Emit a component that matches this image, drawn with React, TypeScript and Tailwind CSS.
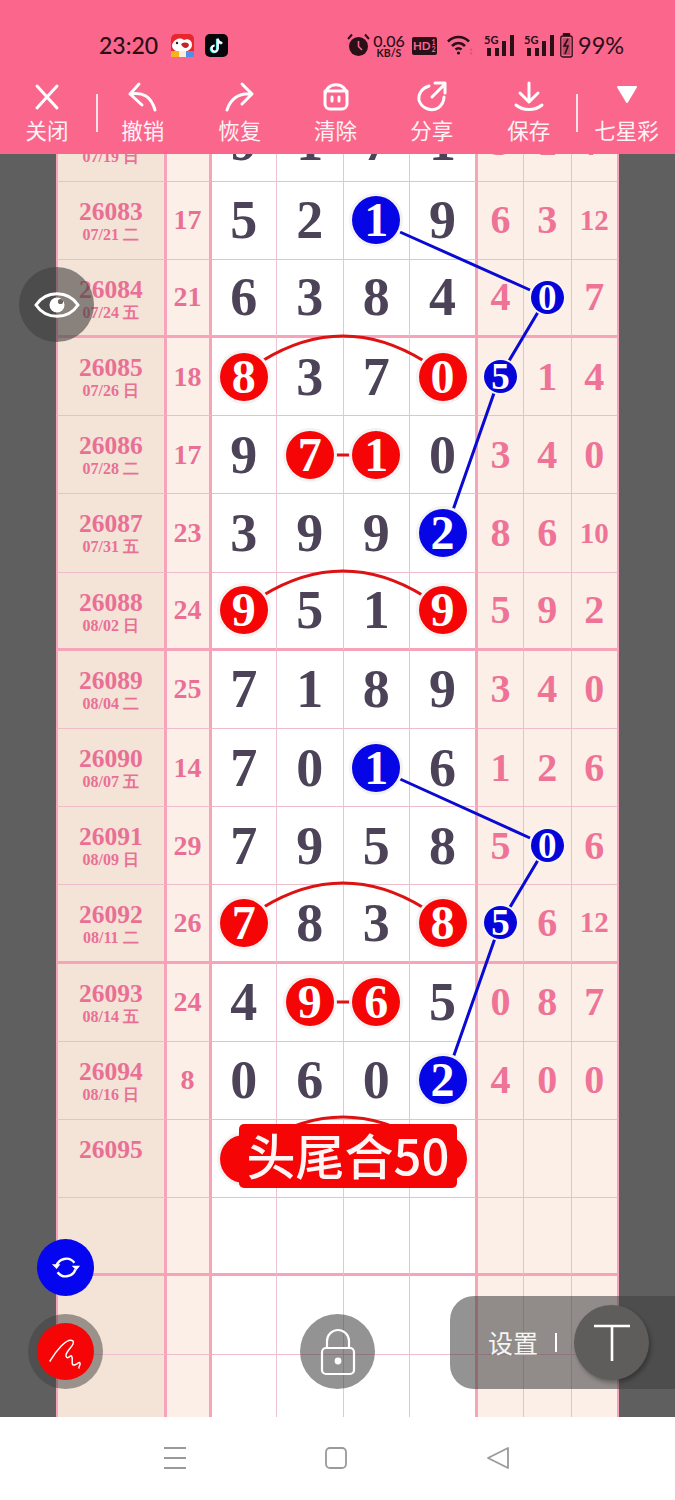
const serif = "font-['Liberation_Serif',serif] font-bold";
const cjk = "font-['Noto_Sans_CJK_SC',sans-serif]";

type Mark = 'red' | 'blue' | 'small' | undefined;

type Row = {
  issue?: string;
  date?: string;
  sum?: string;
  digits?: string[];
  marks?: Mark[];
  side?: string[];
  sideMarks?: Mark[];
  thick?: boolean;
};

const rows: Row[] = [
  { issue: '26082', date: '07/19 日', digits: ['9', '1', '7', '1'], side: ['3', '1', '7'] },
  { issue: '26083', date: '07/21 二', sum: '17', digits: ['5', '2', '1', '9'], marks: [, , 'blue'], side: ['6', '3', '12'] },
  { issue: '26084', date: '07/24 五', sum: '21', digits: ['6', '3', '8', '4'], side: ['4', '0', '7'], sideMarks: [, 'small'], thick: true },
  { issue: '26085', date: '07/26 日', sum: '18', digits: ['8', '3', '7', '0'], marks: ['red', , , 'red'], side: ['5', '1', '4'], sideMarks: ['small'] },
  { issue: '26086', date: '07/28 二', sum: '17', digits: ['9', '7', '1', '0'], marks: [, 'red', 'red'], side: ['3', '4', '0'] },
  { issue: '26087', date: '07/31 五', sum: '23', digits: ['3', '9', '9', '2'], marks: [, , , 'blue'], side: ['8', '6', '10'] },
  { issue: '26088', date: '08/02 日', sum: '24', digits: ['9', '5', '1', '9'], marks: ['red', , , 'red'], side: ['5', '9', '2'], thick: true },
  { issue: '26089', date: '08/04 二', sum: '25', digits: ['7', '1', '8', '9'], side: ['3', '4', '0'] },
  { issue: '26090', date: '08/07 五', sum: '14', digits: ['7', '0', '1', '6'], marks: [, , 'blue'], side: ['1', '2', '6'] },
  { issue: '26091', date: '08/09 日', sum: '29', digits: ['7', '9', '5', '8'], side: ['5', '0', '6'], sideMarks: [, 'small'] },
  { issue: '26092', date: '08/11 二', sum: '26', digits: ['7', '8', '3', '8'], marks: ['red', , , 'red'], side: ['5', '6', '12'], sideMarks: ['small'], thick: true },
  { issue: '26093', date: '08/14 五', sum: '24', digits: ['4', '9', '6', '5'], marks: [, 'red', 'red'], side: ['0', '8', '7'] },
  { issue: '26094', date: '08/16 日', sum: '8', digits: ['0', '6', '0', '2'], marks: [, , , 'blue'], side: ['4', '0', '0'] },
  { issue: '26095', digits: ['', '', '', ''], marks: ['red', , , 'red'] },
  { thick: true },
  {},
  {},
];

const Digit = ({ value, mark }: { value: string; mark?: Mark }) => {
  if (mark === 'red' || mark === 'blue') {
    return (
      <span
        className={`relative z-10 flex h-[48px] w-[48px] items-center justify-center rounded-full text-[48px] leading-none text-white ring-[3px] ring-[#f4f2f2] ${
          mark === 'red' ? 'bg-[#f50505]' : 'bg-[#0505e6]'
        }`}
      >
        {value}
      </span>
    );
  }
  return <span className="text-[54px] leading-none text-[#4d4358]">{value}</span>;
};

const SideDigit = ({ value, mark }: { value: string; mark?: Mark }) => {
  if (mark === 'small') {
    return (
      <span className="relative z-10 flex h-[33px] w-[33px] items-center justify-center rounded-full bg-[#0505d8] text-[37px] leading-none text-white ring-[2px] ring-[#f8f3f0]">
        {value}
      </span>
    );
  }
  return (
    <span className={`${value.length > 1 ? 'text-[29px]' : 'text-[40px]'} leading-none text-[#ee7397]`}>{value}</span>
  );
};

const TableRow = ({ row }: { row: Row }) => {
  const bottom = row.thick ? 'border-b-[3px] border-b-[#f7a3b9]' : 'border-b border-b-[#efbccb]';
  const digits = row.digits ?? ['', '', '', ''];
  const side = row.side ?? ['', '', ''];
  return (
    <div className={`grid h-[78.2px] grid-cols-[110.5px_45px_65.5px_66.5px_66.5px_68px_46px_47.5px_47.5px] ${serif}`}>
      <div className={`flex flex-col items-center justify-start border-r-[3px] border-l-2 border-r-[#f7a3b9] border-l-[#f7a3b9] bg-[#f4e3d7] pt-[18px] text-[#e96f95] ${bottom}`}>
        {row.issue && <span className="text-[25.5px] leading-[24px]">{row.issue}</span>}
        {row.date && <span className="text-[16px] leading-[22px]">{row.date}</span>}
      </div>
      <div className={`flex items-center justify-center border-r-[3px] border-r-[#f7a3b9] bg-[#fbefe8] text-[28px] text-[#e96f95] ${bottom}`}>
        {row.sum}
      </div>
      {digits.map((value, i) => (
        <div
          key={i}
          className={`flex items-center justify-center bg-white ${bottom} ${
            i === 3 ? 'border-r-[3px] border-r-[#f7a3b9]' : 'border-r border-r-[#ebc3d3]'
          }`}
        >
          {row.marks?.[i] || value ? <Digit value={value} mark={row.marks?.[i]} /> : null}
        </div>
      ))}
      {side.map((value, i) => (
        <div
          key={i}
          className={`flex items-center justify-center bg-[#fbefe8] ${bottom} ${
            i === 2 ? 'border-r-2 border-r-[#f7a3b9]' : 'border-r border-r-[#efbccb]'
          }`}
        >
          <SideDigit value={value} mark={row.sideMarks?.[i]} />
        </div>
      ))}
    </div>
  );
};

const Lines = () => (
  <svg className="absolute top-0 left-0 z-[5] h-[1263px] w-[675px]" viewBox="0 154 675 1263" fill="none">
    <g stroke="#0a0ad2" strokeWidth="3">
      <path d="M400 232 530 290M547 297 500 376 453 510" />
      <path d="M400 779 530 838M547 845 500 924 453 1058" />
    </g>
    <g stroke="#dd1212" strokeWidth="3">
      <path d="M262 361Q343 311 424 361" />
      <path d="M262 596Q343 546 424 596" />
      <path d="M262 908Q343 858 424 908" />
      <path d="M262 1142Q343 1092 424 1142" />
      <path d="M336 455H351M336 1002H351" />
    </g>
  </svg>
);

const StatusBar = () => (
  <div className="relative h-[71px] font-['Lato',sans-serif] text-[#2a0f18]">
    <span className="absolute top-[31px] left-[99px] text-[23px] leading-[28px] font-medium">23:20</span>
    <svg className="absolute top-[34px] left-[171px]" width="23" height="23" viewBox="0 0 23 23">
      <rect width="23" height="23" rx="5" fill="#e8262c" />
      <path d="M1 11C3 5 9 3 13 6C17 4 21 6 21 11C21 16 14 19 8 18C4 17 1 15 1 11Z" fill="#fff" />
      <path d="M10 10C13 8 17 8 18 11C17 15 12 15 10 10Z" fill="#c9222c" />
      <circle cx="6" cy="9" r="1.2" fill="#222" />
      <rect y="17" width="8" height="6" fill="#f6b21f" />
      <rect x="8" y="17" width="7" height="6" fill="#f5f0dc" />
      <rect x="15" y="17" width="8" height="6" fill="#4f8fe8" />
    </svg>
    <svg className="absolute top-[34px] left-[205px]" width="23" height="23" viewBox="0 0 23 23" fill="none">
      <rect width="23" height="23" rx="5" fill="#07060a" />
      <path d="M12.8 4.5V14.6A3.1 3.1 0 1 1 9.7 11.5M12.8 5.2C13.4 7.4 15 8.8 17.4 9" stroke="#25e3ea" strokeWidth="2.2" transform="translate(-.8 .5)" />
      <path d="M12.8 4.5V14.6A3.1 3.1 0 1 1 9.7 11.5M12.8 5.2C13.4 7.4 15 8.8 17.4 9" stroke="#fff" strokeWidth="2.2" />
    </svg>
    <svg className="absolute top-[33px] left-[347px]" width="23" height="24" viewBox="0 0 23 24" fill="#2a0f18">
      <circle cx="11.5" cy="13.5" r="9.5" />
      <path d="M11.5 8V13.5L15 17" stroke="#fb668c" strokeWidth="1.6" fill="none" />
      <path d="M1 6 5 1.5M22 6 18 1.5" stroke="#2a0f18" strokeWidth="2" />
    </svg>
    <div className="absolute top-[34px] left-[372px] flex w-[34px] flex-col items-center text-[#2a0f18]">
      <span className="text-[16px] leading-[14px] font-medium">0.06</span>
      <span className="text-[10.5px] leading-[10px] font-bold">KB/S</span>
    </div>
    <div className="absolute top-[37px] left-[412px] flex h-[18px] w-[25px] items-center rounded-[2px] bg-[#2a0f18] pl-[1px] text-[#fb668c]">
      <span className="text-[11.5px] leading-none font-bold">HD</span>
      <span className="ml-[1px] flex flex-col text-[7px] leading-[7px] font-bold">
        <span>1</span>
        <span>2</span>
      </span>
    </div>
    <svg className="absolute top-[34px] left-[447px]" width="27" height="22" viewBox="0 0 27 22" fill="none" stroke="#2a0f18" strokeWidth="2.6">
      <path d="M1 7.5C7 1.5 16 1.5 22 7.5M5 12C9 8 14 8 18 12M8.5 15.5C10.5 13.8 12.5 13.8 14.5 15.5" />
      <circle cx="11.5" cy="19" r="1.6" fill="#2a0f18" stroke="none" />
      <path d="M24 14 25.5 16.5H22.5ZM24 21 25.5 18.5H22.5Z" fill="#d9536f" stroke="none" />
    </svg>
    {[484, 524].map(left => (
      <div key={left} className="absolute top-[34px] h-[22px] w-[32px]" style={{ left }}>
        <span className="absolute top-0 left-0 text-[11px] leading-[11px] font-bold">5G</span>
        <span className="absolute bottom-0 left-[3px] h-[8px] w-[4px] bg-[#2a0f18]" />
        <span className="absolute bottom-0 left-[11px] h-[8px] w-[4px] bg-[#2a0f18]" />
        <span className="absolute bottom-0 left-[18px] h-[15px] w-[4px] bg-[#2a0f18]" />
        <span className="absolute bottom-0 left-[26px] h-[21px] w-[4px] bg-[#2a0f18]" />
      </div>
    ))}
    <svg className="absolute top-[33px] left-[560px]" width="13" height="25" viewBox="0 0 13 25" fill="none" stroke="#2a0f18" strokeWidth="1.3">
      <rect x="3.5" y=".7" width="6" height="2" fill="#2a0f18" />
      <rect x=".8" y="3" width="11.4" height="21" rx="2" />
      <path d="M8 6 4 13H8L5 21" strokeWidth="1.6" />
      <rect x="2.5" y="5" width="8" height="17" fill="#2a0f18" opacity=".3" stroke="none" />
    </svg>
    <span className="absolute top-[31px] left-[578px] text-[23.5px] leading-[28px]">99%</span>
  </div>
);

const Tool = ({ label, className, children }: { label: string; className: string; children: React.ReactNode }) => (
  <div className={`flex flex-col items-center ${className}`}>
    <svg width="36" height="36" viewBox="0 0 36 36" fill="none" stroke="#fff" strokeWidth="3" strokeLinecap="round" strokeLinejoin="round" className="mt-[8px]">
      {children}
    </svg>
    <span className={`${cjk} text-[21.5px] leading-[30px] text-[#fff3f6]`}>{label}</span>
  </div>
);

const Toolbar = () => (
  <div className="relative flex h-[83px]">
    <Tool label="关闭" className="w-[94px]">
      <path d="M8 7 28 29M28 7 8 29" />
    </Tool>
    <Tool label="撤销" className="w-[98px]">
      <path d="M14 5 5 15 17 26M5 15C18 13 26 17 30 31" />
    </Tool>
    <Tool label="恢复" className="w-[96px]">
      <path d="M20 5 30 15 20 25M30 15C18 14 9 19 5 31" />
    </Tool>
    <Tool label="清除" className="w-[96px]">
      <path d="M7 17C7 2 29 2 29 17M7 12H29V25A5 5 0 0 1 24 30H12A5 5 0 0 1 7 25Z" />
      <path d="M14 18V22M21 18V22" />
    </Tool>
    <Tool label="分享" className="w-[97px]">
      <path d="M15 7C8 9 4 15 5 21C7 29 17 33 24 29C28 26 30 23 30 18M18 18 31 5M21 4H31V14" />
    </Tool>
    <Tool label="保存" className="w-[97px]">
      <path d="M18 4V22M9 14 18 23 27 14M5 26C12 32 24 32 31 26" />
    </Tool>
    <Tool label="七星彩" className="ml-[1px] w-[97px]">
      <path d="M9 8H27L18 23Z" fill="#fff" strokeWidth="2" />
    </Tool>
    <span className="absolute top-[23px] left-[96px] h-[38px] w-[2px] bg-[#ffe3ea]" />
    <span className="absolute top-[23px] left-[576px] h-[38px] w-[2px] bg-[#ffe3ea]" />
  </div>
);

const FloatingButtons = () => (
  <>
    <div className="absolute top-[113px] left-[19px] z-20 flex h-[75px] w-[75px] items-center justify-center rounded-full bg-[#40404099]">
      <svg width="46" height="32" viewBox="0 0 46 32" fill="none">
        <path d="M2 16C12 1 34 1 44 16C34 31 12 31 2 16Z" stroke="#fff" strokeWidth="3" />
        <circle cx="23" cy="16" r="7.5" fill="#fff" />
        <circle cx="26.5" cy="12.5" r="2.6" fill="#6a6461" />
      </svg>
    </div>
    <div className="absolute top-[1085px] left-[37px] z-20 flex h-[57px] w-[57px] items-center justify-center rounded-full bg-[#0505f0]">
      <svg width="30" height="25" viewBox="0 0 32 26" fill="none" stroke="#fff" strokeWidth="2.6">
        <path d="M6 11C8 4 19 0 25 8M26 15C24 22 13 26 7 18" />
        <path d="M1 9.5H10L6 14.5ZM22 11H31L27 16Z" fill="#fff" stroke="none" />
      </svg>
    </div>
    <div className="absolute top-[1160px] left-[28px] z-20 flex h-[75px] w-[75px] items-center justify-center rounded-full bg-[#40404080]">
      <div className="flex h-[57px] w-[57px] items-center justify-center rounded-full bg-[#f50505]">
        <svg width="36" height="36" viewBox="0 0 36 36" fill="none" stroke="#fff" strokeWidth="1.5" strokeLinecap="round" strokeLinejoin="round">
          <path d="M2 27C8 17 19 3 25 7C28 11 17 17 18 22C20 27 23 19 24 23C25 26 23 29 25 31C28 32 31 27 32 29C33 31 30 33 31 34" />
        </svg>
      </div>
    </div>
    <div className="absolute top-[1160px] left-[300px] z-20 flex h-[75px] w-[75px] items-center justify-center rounded-full bg-[#40404090]">
      <svg width="38" height="48" viewBox="0 0 38 48" fill="none" stroke="#fff" strokeWidth="2.2">
        <path d="M8 21V13A11 11 0 0 1 30 13V21" />
        <rect x="3" y="20" width="32" height="26" rx="4" />
        <circle cx="19" cy="33" r="3.4" fill="#fff" stroke="none" />
      </svg>
    </div>
    <div className="absolute top-[1142px] left-[450px] z-20 flex h-[93px] w-[225px] items-center rounded-l-[24px] bg-[#40404090]">
      <span className={`${cjk} ml-[38px] text-[25px] leading-none text-[#f5f5f5]`}>设置</span>
      <span className="ml-[17px] h-[19px] w-[2px] bg-white" />
      <div className="absolute top-[9px] left-[124px] flex h-[75px] w-[75px] items-center justify-center rounded-full bg-[#5f5c5c] shadow-[2px_3px_4px_rgba(0,0,0,0.3)]">
        <svg width="36" height="38" viewBox="0 0 36 38" fill="none" stroke="#fff" strokeWidth="2.6">
          <path d="M0 2H36M18 2V37" />
        </svg>
      </div>
    </div>
  </>
);

const NavBar = () => (
  <div className="flex h-[83px] items-start bg-white pt-[29px]">
    <svg className="ml-[163px]" width="24" height="24" viewBox="0 0 24 24" stroke="#9a9a9a" strokeWidth="1.8">
      <path d="M1 2H23M1 12H23M1 22H23" />
    </svg>
    <svg className="ml-[137px]" width="24" height="24" viewBox="0 0 24 24" fill="none" stroke="#9a9a9a" strokeWidth="1.8">
      <rect x="2" y="2" width="20" height="20" rx="4" />
    </svg>
    <svg className="ml-[138px]" width="24" height="24" viewBox="0 0 24 24" fill="none" stroke="#9a9a9a" strokeWidth="1.8" strokeLinejoin="round">
      <path d="M22 2V22L2 12Z" />
    </svg>
  </div>
);

export default function App() {
  return (
    <div className="flex h-[1500px] w-[675px] flex-col overflow-hidden bg-[#5f5f5f]">
      <div className="relative z-30 h-[154px] bg-[#fb668c]">
        <StatusBar />
        <Toolbar />
      </div>
      <div className="relative h-[1263px] overflow-hidden">
        <div className="mt-[-50.5px] ml-[56px] w-[563px]">
          {rows.map((row, i) => (
            <TableRow key={i} row={row} />
          ))}
        </div>
        <Lines />
        <div className={`absolute top-[970px] left-[239px] z-10 flex h-[64px] w-[218px] items-center justify-center rounded-[5px] bg-[#f50505] pb-[5px] ${cjk} text-[49px] leading-none font-medium whitespace-nowrap text-[#fff5f5]`}>
          头尾合50
        </div>
        <FloatingButtons />
      </div>
      <NavBar />
    </div>
  );
}
